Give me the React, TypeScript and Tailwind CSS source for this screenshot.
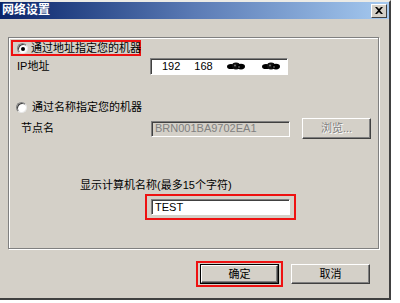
import React from 'react';

const font = { fontFamily: '"Liberation Sans", "Noto Sans CJK SC", sans-serif' };

const Radio: React.FC<{ checked?: boolean }> = ({ checked }) => (
  <span className="relative inline-block shrink-0 w-[11px] h-[11px] rounded-full bg-white border border-t-[#808080] border-l-[#808080] border-b-[#e8e8e8] border-r-[#e8e8e8] shadow-[inset_1px_1px_0_#404040]">
    {checked && (
      <span className="absolute left-[3px] top-[3px] w-[4px] h-[4px] rounded-full bg-black" />
    )}
  </span>
);

const Field: React.FC<{ children?: React.ReactNode; disabled?: boolean; className?: string }> = ({
  children,
  disabled,
  className = '',
}) => (
  <div
    className={`flex items-center border border-t-[#808080] border-l-[#808080] border-b-white border-r-white shadow-[inset_1px_1px_0_#404040] whitespace-nowrap ${
      disabled ? 'bg-[#d4d0c8] text-[#808080]' : 'bg-white text-black'
    } ${className}`}
  >
    {children}
  </div>
);

const Button: React.FC<{ children: React.ReactNode; disabled?: boolean; isDefault?: boolean; className?: string }> = ({
  children,
  disabled,
  isDefault,
  className = '',
}) => (
  <div
    className={`flex items-center justify-center bg-[#d4d0c8] ${
      isDefault ? 'border border-black' : ''
    } ${className}`}
  >
    <div className="w-full h-full flex items-center justify-center border border-t-white border-l-white border-b-[#404040] border-r-[#404040] shadow-[inset_-1px_-1px_0_#808080]">
      <span className={disabled ? 'text-[#808080] [text-shadow:1px_1px_0_#fff]' : 'text-black'}>{children}</span>
    </div>
  </div>
);

// scribbled-out octets in the screenshot
const Blob: React.FC = () => (
  <svg width="18" height="9" viewBox="0 0 18 9" className="blur-[0.4px]">
    <ellipse cx="4" cy="4.5" rx="4" ry="2.6" fill="#000" />
    <ellipse cx="9" cy="4" rx="4" ry="3.4" fill="#111" />
    <ellipse cx="14" cy="4.6" rx="4" ry="2.8" fill="#000" />
    <circle cx="8" cy="3.5" r="1" fill="#777" />
    <circle cx="12" cy="5" r="0.8" fill="#888" />
  </svg>
);

const App: React.FC = () => {
  return (
    <div className="w-[400px] h-[303px] bg-white text-[11px] leading-[13px] whitespace-nowrap" style={font}>
      <div className="w-[391px] h-[300px] bg-[#d4d0c8] border-t-2 border-t-[#ecebe6] border-r-2 border-r-[#404040] border-b-2 border-b-[#404040] flex flex-col">
        {/* title bar */}
        <div className="h-[17px] flex items-center justify-between bg-gradient-to-r from-[#0a246a] via-[#5b7bb5] to-[#a6caf0] pl-[2px] pr-[2px]">
          <span className="text-white font-bold text-[12px]">网络设置</span>
          <div className="w-[16px] h-[14px] bg-[#d4d0c8] border border-t-white border-l-white border-b-[#404040] border-r-[#404040] flex items-center justify-center">
            <svg width="8" height="7" viewBox="0 0 8 7">
              <path d="M0 0h2l2 2 2-2h2L5 3.5 8 7H6L4 5 2 7H0l3-3.5z" fill="#000" />
            </svg>
          </div>
        </div>

        {/* group box */}
        <div className="mt-[18px] ml-[8px] w-[371px] h-[212px] border border-[#808080] shadow-[inset_1px_1px_0_#fff,1px_1px_0_#fff] flex flex-col">
          <div className="mt-[2px] ml-[2px] w-[130px] h-[16px] border-2 border-[#ee1111] flex items-center pl-[4px] gap-[3px]">
            <Radio checked />
            <span>通过地址指定您的机器</span>
          </div>

          <div className="mt-[2px] flex items-center">
            <span className="ml-[8px] w-[133px]">IP地址</span>
            <Field className="w-[138px] h-[17px]">
              <span className="ml-[11px]">192</span>
              <span className="ml-[14px]">168</span>
              <span className="ml-[14px] flex"><Blob /></span>
              <span className="ml-[17px] flex"><Blob /></span>
            </Field>
          </div>

          <div className="mt-[25px] flex items-center ml-[7px] gap-[5px] h-[14px]">
            <Radio />
            <span>通过名称指定您的机器</span>
          </div>

          <div className="mt-[4px] flex items-center h-[21px]">
            <span className="ml-[12px] w-[130px]">节点名</span>
            <Field disabled className="w-[139px] h-[16px] pl-[3px]">
              BRN001BA9702EA1
            </Field>
            <Button disabled className="ml-[12px] w-[69px] h-[21px]">
              浏览...
            </Button>
          </div>

          <div className="mt-[40px] ml-[71px] h-[14px]">显示计算机名称(最多15个字符)</div>

          <div className="mt-[1px] ml-[136px] w-[151px] h-[26px] border-2 border-[#ee1111] flex items-center pl-[4px]">
            <Field className="w-[139px] h-[16px] pl-[3px]">TEST</Field>
          </div>
        </div>

        {/* buttons */}
        <div className="mt-[12px] flex items-center">
          <div className="ml-[196px] w-[87px] h-[26px] border-2 border-[#ee1111] flex items-center justify-center">
            <Button isDefault className="w-[79px] h-[20px]">
              确定
            </Button>
          </div>
          <Button className="ml-[8px] w-[79px] h-[20px]">取消</Button>
        </div>
      </div>
    </div>
  );
};

export default App;
